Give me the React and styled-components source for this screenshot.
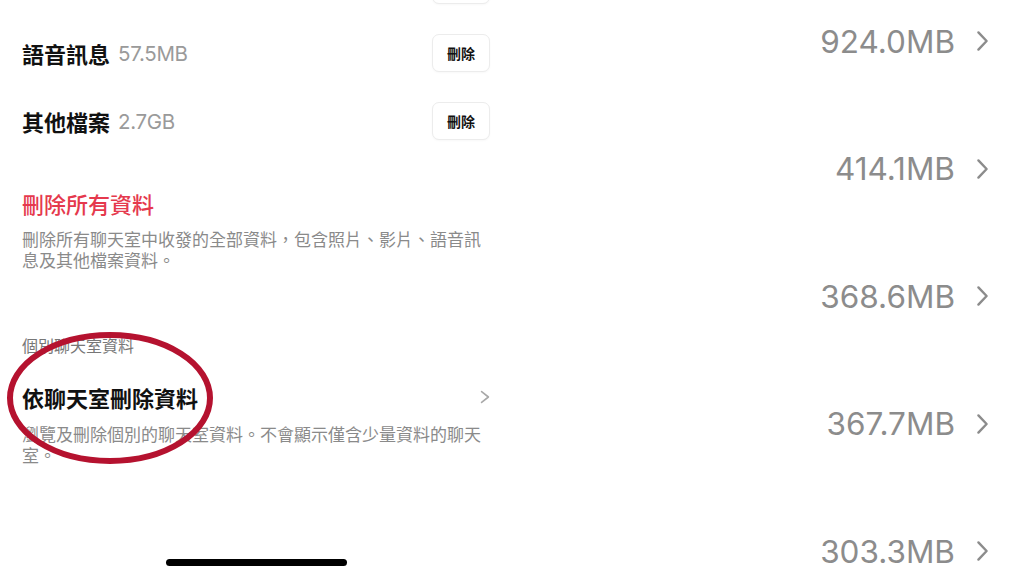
import React from "react";
import styled, { createGlobalStyle } from "styled-components";

const GlobalStyle = createGlobalStyle`
  html, body {
    margin: 0;
    padding: 0;
    background: #fff;
    overflow: hidden;
  }
  body {
    font-family: "Noto Sans CJK TC", "Noto Sans", sans-serif;
  }
`;

const Page = styled.div`
  display: flex;
  width: 1024px;
  height: 576px;
  background: #fff;
  overflow: hidden;
`;

const LeftPane = styled.div`
  position: relative;
  width: 512px;
  height: 576px;
  box-sizing: border-box;
  padding: 0 22px;
  display: flex;
  flex-direction: column;
`;

const StorageList = styled.div`
  display: flex;
  flex-direction: column;
  gap: 30px;
  margin-top: -34px;
`;

const StorageRow = styled.div`
  display: flex;
  align-items: center;
  justify-content: flex-end;
  height: 38px;
`;

const Label = styled.span`
  font-size: 22px;
  font-weight: 700;
  color: #111;
  line-height: 30px;
`;

const Size = styled.span`
  font-family: "Inter", "Noto Sans", sans-serif;
  font-size: 20.5px;
  font-weight: 400;
  letter-spacing: -0.3px;
  color: #9a9a9a;
  margin-left: 8px;
  flex: 1;
`;

const SmallButton = styled.button`
  width: 58px;
  height: 38px;
  border: 1px solid #ececec;
  border-radius: 7px;
  background: #fff;
  font-family: "Noto Sans CJK TC", sans-serif;
  font-size: 14px;
  font-weight: 700;
  color: #111;
  padding: 0;
  box-shadow: 0 1px 2px rgba(0, 0, 0, 0.03);
`;

const DangerTitle = styled.div`
  margin-top: 48px;
  font-size: 22px;
  font-weight: 500;
  line-height: 30px;
  color: #e5394d;
`;

const Description = styled.p`
  margin: ${(p) => p.$top}px 0 0;
  font-size: 17px;
  line-height: 21px;
  color: #8a8a8a;
`;

const SectionLabel = styled.div`
  margin-top: 64px;
  font-size: 16px;
  line-height: 22px;
  color: #777;
`;

const NavRow = styled.div`
  display: flex;
  align-items: center;
  justify-content: space-between;
  margin-top: 26px;
`;

const NavTitle = styled.span`
  font-size: 22px;
  font-weight: 700;
  line-height: 30px;
  color: #111;
`;

const HomeIndicator = styled.div`
  margin-top: auto;
  margin-bottom: 10px;
  align-self: center;
  width: 181px;
  height: 7px;
  border-radius: 4px;
  background: #000;
`;

const Annotation = styled.svg`
  position: absolute;
  left: 4px;
  top: 329px;
  pointer-events: none;
`;

const RightPane = styled.div`
  width: 512px;
  height: 576px;
  box-sizing: border-box;
  padding: 28px 35px 0 0;
  display: flex;
  flex-direction: column;
  gap: 101.5px;
`;

const SizeRow = styled.div`
  display: flex;
  justify-content: flex-end;
  align-items: center;
  gap: 21px;
  height: 26px;
`;

const BigSize = styled.span`
  font-family: "Inter", "Noto Sans", sans-serif;
  font-size: 31.5px;
  font-weight: 400;
  letter-spacing: 0;
  color: #8c8c8c;
`;

const Chevron = ({ w, h, stroke, color }) => (
  <svg width={w} height={h} viewBox={`0 0 ${w} ${h}`} fill="none">
    <polyline
      points={`${stroke},${stroke} ${w - stroke},${h / 2} ${stroke},${h - stroke}`}
      stroke={color}
      strokeWidth={stroke}
      strokeLinecap="round"
      strokeLinejoin="round"
    />
  </svg>
);

// the first row is scrolled off the top; only its button's lower edge shows
const storage = [
  { label: "語音訊息", size: "57.5MB" },
  { label: "其他檔案", size: "2.7GB" },
];

const chats = ["924.0MB", "414.1MB", "368.6MB", "367.7MB", "303.3MB"];

export default function App() {
  return (
    <Page>
      <GlobalStyle />
      <LeftPane>
        <StorageList>
          <StorageRow>
            <SmallButton aria-hidden="true" />
          </StorageRow>
          {storage.map((s) => (
            <StorageRow key={s.label}>
              <Label>{s.label}</Label>
              <Size>{s.size}</Size>
              <SmallButton>刪除</SmallButton>
            </StorageRow>
          ))}
        </StorageList>
        <DangerTitle>刪除所有資料</DangerTitle>
        <Description $top={10}>
          刪除所有聊天室中收發的全部資料，包含照片、影片、語音訊息及其他檔案資料。
        </Description>
        <SectionLabel>個別聊天室資料</SectionLabel>
        <NavRow>
          <NavTitle>依聊天室刪除資料</NavTitle>
          <Chevron w={10} h={14} stroke={1.6} color="#a8a8a8" />
        </NavRow>
        <Description $top={11}>
          瀏覽及刪除個別的聊天室資料。不會顯示僅含少量資料的聊天室。
        </Description>
        <HomeIndicator />
        <Annotation width="212" height="138" viewBox="0 0 212 138">
          <ellipse
            cx="106"
            cy="69"
            rx="100"
            ry="63"
            fill="none"
            stroke="#b5122f"
            strokeWidth="6"
          />
        </Annotation>
      </LeftPane>
      <RightPane>
        {chats.map((c) => (
          <SizeRow key={c}>
            <BigSize>{c}</BigSize>
            <Chevron w={13} h={22} stroke={2.4} color="#8c8c8c" />
          </SizeRow>
        ))}
      </RightPane>
    </Page>
  );
}
